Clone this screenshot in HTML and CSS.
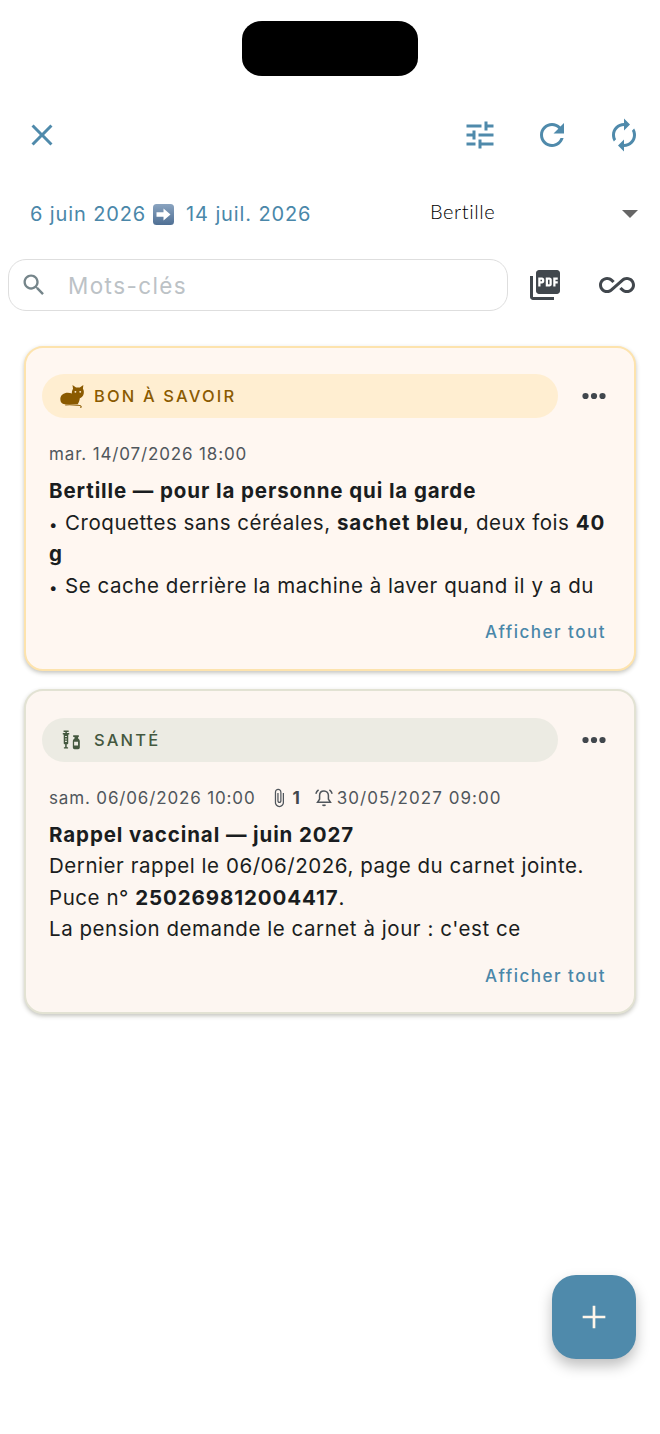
FILE: index.html
```html
<!DOCTYPE html>
<html lang="fr">
<head>
<meta charset="utf-8">
<title>Journal</title>
<link rel="stylesheet" href="styles.css">
</head>
<body>
<div class="page">
  <div class="notch-row"><div class="notch"></div></div>

  <div class="toolbar">
    <button class="icon-btn"><svg class="ic-36" viewBox="0 0 24 24"><path d="M19 6.41L17.59 5 12 10.59 6.41 5 5 6.41 10.59 12 5 17.59 6.41 19 12 13.41 17.59 19 19 17.59 13.41 12z"/></svg></button>
    <div class="toolbar-right">
      <button class="icon-btn"><svg class="ic-36" viewBox="0 0 24 24"><path d="M3 17v2h6v-2H3zM3 5v2h10V5H3zm10 16v-2h8v-2h-8v-2h-2v6h2zM7 9v2H3v2h4v2h2V9H7zm14 4v-2H11v2h10zm-6-4h2V7h4V5h-4V3h-2v6z"/></svg></button>
      <button class="icon-btn"><svg class="ic-36" viewBox="0 0 24 24"><path d="M17.65 6.35C16.2 4.9 14.21 4 12 4c-4.42 0-7.99 3.58-7.99 8s3.57 8 7.99 8c3.73 0 6.84-2.55 7.73-6h-2.08c-.82 2.33-3.04 4-5.65 4-3.31 0-6-2.69-6-6s2.69-6 6-6c1.66 0 3.14.69 4.22 1.78L13 11h7V4l-2.35 2.35z"/></svg></button>
      <button class="icon-btn"><svg class="ic-36" viewBox="0 0 24 24"><path transform="matrix(-1 0 0 1 24 0)" d="M12 4V1L8 5l4 4V6c3.31 0 6 2.69 6 6 0 1.01-.25 1.97-.7 2.8l1.46 1.46C19.54 15.03 20 13.57 20 12c0-4.42-3.58-8-8-8zm0 14c-3.31 0-6-2.69-6-6 0-1.01.25-1.97.7-2.8L5.24 7.74C4.46 8.97 4 10.43 4 12c0 4.42 3.58 8 8 8v3l4-4-4-4v3z"/></svg></button>
    </div>
  </div>

  <div class="filter-row">
    <div class="dates">
      <span>6 juin 2026</span>
      <svg class="emoji-arrow" viewBox="0 0 21 21">
        <defs><linearGradient id="arrowBg" x1="0" y1="0" x2="0" y2="1"><stop offset="0" stop-color="#8aa4c0"/><stop offset="1" stop-color="#4f6f94"/></linearGradient></defs>
        <rect width="21" height="21" rx="3.5" fill="url(#arrowBg)"/>
        <path d="M3.5 8.3h7V4.6l7 5.9-7 5.9v-3.7h-7z" fill="#fff"/>
      </svg>
      <span class="date-end">14 juil. 2026</span>
    </div>
    <div class="select">
      <span class="select-value">Bertille</span>
      <span class="caret"></span>
    </div>
  </div>

  <div class="search-row">
    <div class="search">
      <svg class="search-ic" viewBox="0 0 24 24"><path d="M15.5 14h-.79l-.28-.27C15.41 12.59 16 11.11 16 9.5 16 5.91 13.09 3 9.5 3S3 5.91 3 9.5 5.91 16 9.5 16c1.61 0 3.09-.59 4.23-1.57l.27.28v.79l5 4.99L20.49 19l-4.99-5zm-6 0C7.01 14 5 11.99 5 9.5S7.01 5 9.5 5 14 7.01 14 9.5 11.99 14 9.5 14z"/></svg>
      <span class="placeholder">Mots-clés</span>
    </div>
    <div class="search-actions">
      <svg class="ic-dark ic-pdf" viewBox="0 0 24 24"><path d="M20 2H8c-1.1 0-2 .9-2 2v12c0 1.1.9 2 2 2h12c1.100 0 2-.9 2-2V4c0-1.100-.9-2-2-2zm-8.500 7.500c0 .83-.67 1.500-1.500 1.500H9v2H7.500V7H10c.83 0 1.500.67 1.500 1.500v1zm5 2c0 .83-.67 1.500-1.500 1.500h-2.500V7H15c.83 0 1.500.67 1.500 1.500v3zm4-3H19v1h1.500V11H19v2h-1.500V7h3v1.500zM9 9.500h1v-1H9v1zM4 6H2v14c0 1.100.9 2 2 2h14v-2H4V6zm10 5.500h1v-3h-1v3z"/></svg>
      <svg class="ic-dark ic-inf" viewBox="0 0 24 24"><path d="M18.600 6.620c-1.440 0-2.800.56-3.770 1.530L12 10.660 10.480 12h.01L7.800 14.390c-.64.64-1.490.99-2.400.99-1.870 0-3.390-1.510-3.390-3.380S3.530 8.620 5.400 8.620c.91 0 1.760.35 2.440 1.030l1.130 1 1.510-1.340L9.220 8.200C8.200 7.180 6.840 6.620 5.400 6.620 2.420 6.620 0 9.040 0 12s2.420 5.380 5.400 5.380c1.440 0 2.800-.56 3.770-1.530l2.830-2.500.01.01L13.520 12h-.01l2.690-2.390c.64-.64 1.490-.99 2.400-.99 1.870 0 3.390 1.510 3.390 3.380s-1.520 3.380-3.390 3.380c-.9 0-1.760-.35-2.440-1.030l-1.140-1.010-1.510 1.340 1.270 1.120c1.020 1.010 2.370 1.570 3.820 1.570 2.980 0 5.400-2.410 5.400-5.380s-2.420-5.370-5.400-5.370z"/></svg>
    </div>
  </div>

  <div class="cards">
    <article class="card card-amber">
      <div class="card-head">
        <div class="chip chip-amber">
          <svg class="chip-ic" viewBox="0 0 24 22">
            <path d="M12.500 3.500 12 0l3.400 2.300h3.600L22.400 0l-.4 3.500c1 1.500 1.300 3.800.4 6-.6 1.500-1.900 2.700-3.400 3.200-.2 2.200-1 4.400-2 5.800H4.500C1.800 18.500.3 16.500.3 13.500.3 9.800 3.600 7.500 7.500 7.500c1.500 0 2.800.2 4 .7-.4-1.500.2-3.300 1-4.700z"/>
            <circle cx="14.800" cy="6.500" r=".9" fill="#ffeed0"/>
            <circle cx="19.400" cy="6.500" r=".9" fill="#ffeed0"/>
            <path d="M5 19.200c4-.6 8-.2 11.500.2 1.700.2 3.500.2 3.800 1.100.1.500-.2 1-.7 1.300" fill="none" stroke="#8a5a00" stroke-width="1"/>
          </svg>
          <span>BON À SAVOIR</span>
        </div>
        <svg class="more" viewBox="0 0 24 24"><circle cx="6" cy="12" r="2.200"/><circle cx="12" cy="12" r="2.200"/><circle cx="18" cy="12" r="2.200"/></svg>
      </div>
      <div class="meta"><span>mar. 14/07/2026 18:00</span></div>
      <div class="body">
        <strong>Bertille — pour la personne qui la garde</strong><br>
        <span class="bullet">•</span><span>Croquettes sans céréales, </span><strong>sachet bleu</strong><span>, deux fois </span><strong>40</strong><br><strong>g</strong><br>
        <span class="bullet">•</span><span>Se cache derrière la machine à laver quand il y a du</span>
      </div>
      <div class="card-foot"><span class="show-all">Afficher tout</span></div>
    </article>

    <article class="card card-sage">
      <div class="card-head">
        <div class="chip chip-sage">
          <svg class="chip-ic" viewBox="1 -2 26 27">
            <path fill="#44583f" d="M3.500 1h6v1.600H7.400V4h2.800v1.600H9V16a1 1 0 0 1-1 1H7.200v3.500H8.800V22H3.900v-1.500h1.500V17H4.700a1 1 0 0 1-1-1V5.600H2.600V4h3V2.600H3.500zM5.300 7.300v1.200h2.100V7.300zm0 2.900v1.200h2.100v-1.200zm0 2.900v1.200h2.100v-1.200z"/>
            <path fill="#44583f" d="M14.800 6.500h6.600v2.200h-.8v1.500c1.300.8 2 1.800 2 3.200V21a2 2 0 0 1-2 2h-4.200a2 2 0 0 1-2-2v-7.600c0-1.400.7-2.400 2-3.200V8.700h-1.600zM15.900 14v4.500h4.600V14z"/>
          </svg>
          <span>SANTÉ</span>
        </div>
        <svg class="more" viewBox="0 0 24 24"><circle cx="6" cy="12" r="2.200"/><circle cx="12" cy="12" r="2.200"/><circle cx="18" cy="12" r="2.200"/></svg>
      </div>
      <div class="meta">
        <span>sam. 06/06/2026 10:00</span>
        <svg class="meta-clip" viewBox="0 0 24 24"><path d="M16.500 6v11.500c0 2.210-1.790 4-4 4s-4-1.790-4-4V5c0-1.380 1.120-2.500 2.500-2.500s2.500 1.120 2.500 2.500v10.500c0 .55-.45 1-1 1s-1-.45-1-1V6H10v9.500c0 1.380 1.120 2.500 2.500 2.500s2.500-1.120 2.500-2.500V5c0-2.210-1.790-4-4-4S7 2.790 7 5v12.500c0 3.040 2.460 5.500 5.500 5.500s5.500-2.460 5.500-5.500V6h-1.500z"/></svg>
        <strong class="meta-count">1</strong>
        <svg class="meta-bell" viewBox="0 0 24 24"><path d="M12 3.500c-3.300 0-5.300 2.500-5.300 5.600v4.400L4.300 17h15.400l-2.400-3.500V9.100c0-3.100-2-5.600-5.300-5.600z"/><path d="M10.300 20a1.900 1.900 0 0 0 3.400 0"/><path d="M5.500 2.300C3.900 3.500 2.800 5 2.200 6.800M18.500 2.300c1.600 1.200 2.700 2.700 3.300 4.500"/></svg>
        <span class="meta-due">30/05/2027 09:00</span>
      </div>
      <div class="body">
        <strong>Rappel vaccinal — juin 2027</strong><br>
        Dernier rappel le 06/06/2026, page du carnet jointe.<br>
        Puce n° <strong>250269812004417</strong>.<br>
        La pension demande le carnet à jour : c'est ce
      </div>
      <div class="card-foot"><span class="show-all">Afficher tout</span></div>
    </article>
  </div>

  <button class="fab"><svg viewBox="0 0 24 24"><path d="M11 3.500h2V11h7.500v2H13v7.500h-2V13H3.500v-2H11z"/></svg></button>
</div>
</body>
</html>
```
FILE: styles.css
```css
* { box-sizing: border-box; }
html, body { margin: 0; padding: 0; background: #fff; }
body { font-family: Inter, "Noto Sans", sans-serif; color: #1a1d20; }
.page { position: relative; width: 660px; height: 1434px; overflow: hidden; }

.notch-row { display: flex; justify-content: center; padding-top: 21px; }
.notch { width: 176px; height: 55px; background: #000; border-radius: 20px / 18px; }

.toolbar { display: flex; justify-content: space-between; align-items: center; height: 48px; margin-top: 35px; padding: 0 18px 0 24px; }
.toolbar-right { display: flex; gap: 36px; }
.icon-btn { width: 36px; height: 36px; padding: 0; border: 0; background: none; display: flex; align-items: center; justify-content: center; }
.ic-36 { width: 36px; height: 36px; flex: none; fill: #4f8aab; }

.filter-row { display: flex; align-items: center; height: 40px; margin-top: 35px; padding: 0 22px 0 30px; }
.dates { display: flex; align-items: center; width: 400px; font-size: 20px; letter-spacing: 0.88px; color: #4a87a9; }
.emoji-arrow { width: 21px; height: 21px; margin-left: 7px; flex: none; }
.date-end { margin-left: 12px; }
.select { flex: 1; display: flex; align-items: center; justify-content: space-between; }
.select-value { font-family: Lato, sans-serif; font-weight: 300; font-size: 20px; letter-spacing: 0.6px; color: #000; margin-bottom: 7px; }
.caret { width: 0; height: 0; border-left: 8px solid transparent; border-right: 8px solid transparent; border-top: 8px solid #666; }

.search-row { display: flex; align-items: center; margin-top: 25px; padding-left: 8px; }
.search { width: 500px; height: 52px; border: 1.500px solid #dedede; border-radius: 18px; display: flex; align-items: center; padding-left: 11px; background: #fff; }
.search-ic { width: 28px; height: 28px; fill: #75858a; flex: none; }
.placeholder { margin-left: 20px; font-size: 22.500px; letter-spacing: 1.400px; color: #bcc2c6; }
.search-actions { display: flex; align-items: center; margin-left: 19px; gap: 36px; }
.ic-dark { fill: #41474d; flex: none; }
.ic-pdf { width: 36px; height: 36px; }
.ic-inf { width: 36px; height: 36px; }

.cards { display: flex; flex-direction: column; gap: 18.500px; margin-top: 34.500px; padding: 0 24px; }
.card { height: 325px; border-radius: 19px; padding: 26.500px 16px 0 16px; background: #fff7f1; border: 2px solid; box-shadow: 0 2px 4px rgba(60, 60, 40, 0.3); }
.card-amber { border-color: #fde3ad; }
.card-sage { border-color: #e2e2d3; background: #fdf6f1; }
.card-head { display: flex; align-items: center; justify-content: space-between; height: 44px; }
.chip { width: 516px; height: 44px; border-radius: 22px; display: flex; align-items: center; padding-left: 18px; gap: 9px; font-size: 16.500px; font-weight: 500; letter-spacing: 2.150px; }
.chip-amber { background: #ffeed1; color: #8a5a00; }
.chip-sage { background: #ecebe3; color: #44583f; }
.chip-ic { width: 25px; height: 23px; flex: none; fill: #8a5a00; }
.more { width: 34px; height: 34px; fill: #41474d; margin-right: 7px; flex: none; }

.meta { display: flex; align-items: center; height: 24px; margin: 24px 0 0 7px; font-size: 17px; letter-spacing: 0.850px; color: #50565c; }
.meta-clip { width: 20px; height: 20px; fill: #50565c; margin-left: 13px; flex: none; }
.meta-count { margin-left: 4px; font-weight: 700; color: #41474d; }
.meta-bell { width: 20px; height: 20px; margin: 0 3px 0 13px; fill: none; stroke: #50565c; stroke-width: 1.800; flex: none; }
.meta-due { letter-spacing: 1.050px; }

.body { margin: 9px 0 0 7px; width: 566px; font-size: 20.500px; line-height: 31.500px; letter-spacing: 0.550px; color: #1a1d20; }
.body strong { font-weight: 700; letter-spacing: 0.900px; }
.bullet { padding-right: 7px; font-size: 15px; line-height: 1; }

.card-foot { display: flex; justify-content: flex-end; margin-top: 21px; padding-right: 12px; }
.show-all { font-size: 17px; font-weight: 500; letter-spacing: 1.500px; color: #4a87a9; }

.fab { position: absolute; left: 552px; top: 1275px; width: 84px; height: 84px; border: 0; padding: 0; border-radius: 24px; background: #4f8aab; box-shadow: 0 7px 14px rgba(0, 0, 0, 0.25); display: flex; align-items: center; justify-content: center; }
.fab svg { width: 32px; height: 32px; fill: #fff6ea; }
```
